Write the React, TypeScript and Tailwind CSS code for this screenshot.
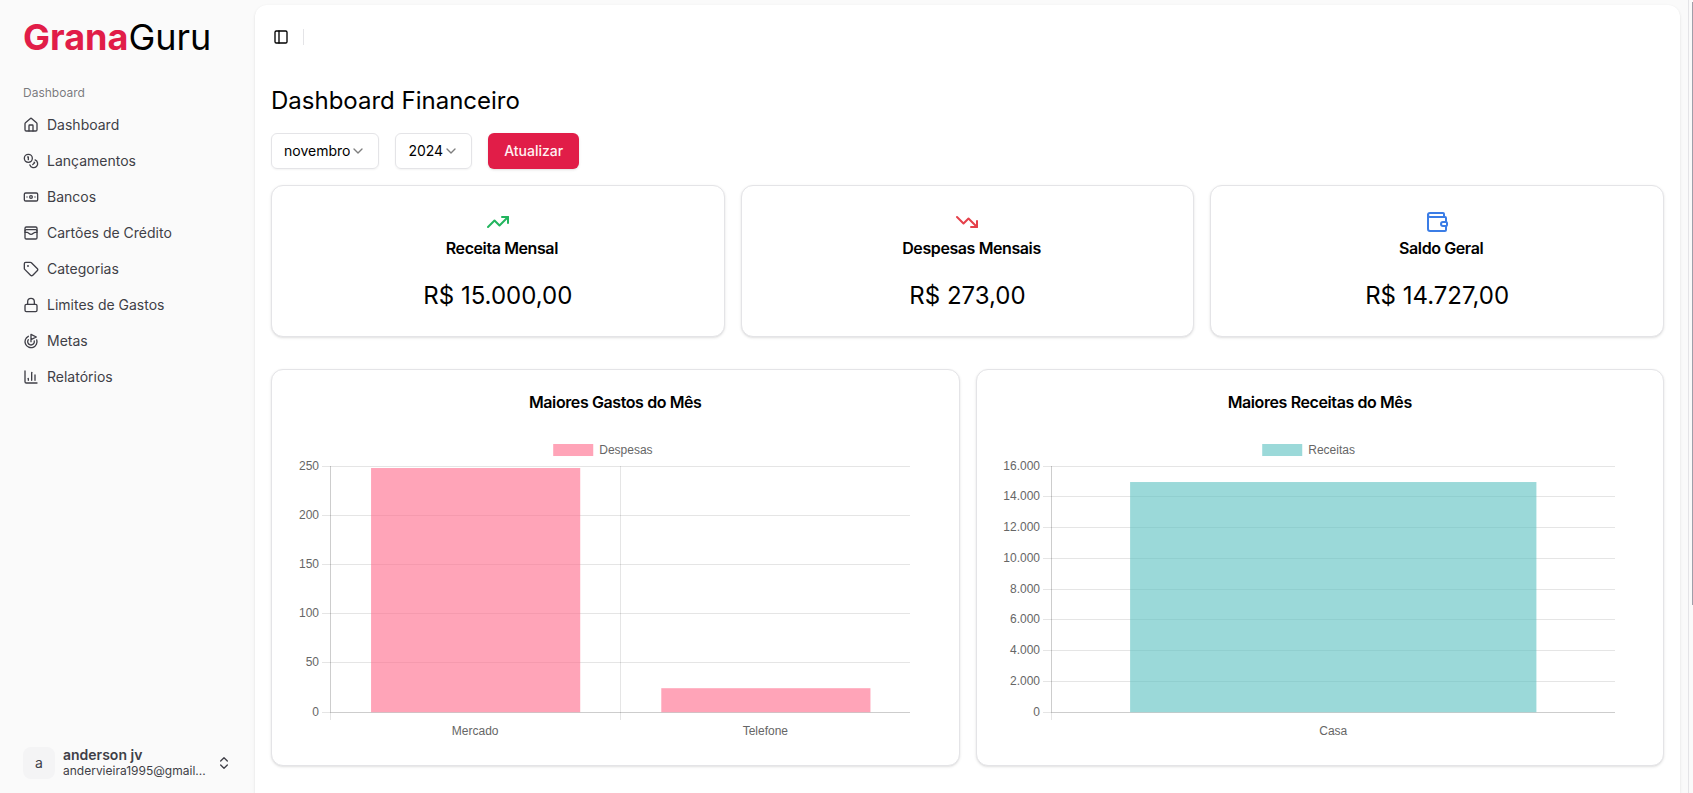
import { useState } from 'react';
import {
  Banknote,
  ChartColumn,
  ChevronDown,
  ChevronsUpDown,
  Coins,
  Goal,
  House,
  Lock,
  PanelLeft,
  Tag,
  TrendingDown,
  TrendingUp,
  Wallet,
  WalletCards,
  type LucideIcon,
} from 'lucide-react';

const NAV_ITEMS: { label: string; icon: LucideIcon }[] = [
  { label: 'Dashboard', icon: House },
  { label: 'Lançamentos', icon: Coins },
  { label: 'Bancos', icon: Banknote },
  { label: 'Cartões de Crédito', icon: WalletCards },
  { label: 'Categorias', icon: Tag },
  { label: 'Limites de Gastos', icon: Lock },
  { label: 'Metas', icon: Goal },
  { label: 'Relatórios', icon: ChartColumn },
];

const MONTHS = [
  'janeiro', 'fevereiro', 'março', 'abril', 'maio', 'junho',
  'julho', 'agosto', 'setembro', 'outubro', 'novembro', 'dezembro',
];

const YEARS = ['2023', '2024', '2025'];

function Sidebar() {
  return (
    <aside className="sticky top-0 flex h-screen w-[255px] shrink-0 flex-col justify-between px-[15px] text-zinc-700">
      <div>
        <h1 className="px-2 pt-4 text-4xl leading-[42px] text-black">
          <span className="font-bold text-[#e11d48]">Grana</span>Guru
        </h1>
        <nav aria-label="Dashboard" className="pt-[19px]">
          <div className="flex h-8 items-center px-2 text-xs text-zinc-700/70">Dashboard</div>
          <ul className="flex flex-col gap-1">
            {NAV_ITEMS.map(({ label, icon: Icon }) => (
              <li key={label}>
                <a href="#" className="flex h-8 items-center gap-2 rounded-md px-2 text-sm hover:bg-zinc-100">
                  <Icon className="size-4 shrink-0" />
                  {label}
                </a>
              </li>
            ))}
          </ul>
        </nav>
      </div>

      <button type="button" className="mb-1.5 flex h-12 items-center gap-2 rounded-md px-2 text-left hover:bg-zinc-100">
        <span className="flex size-8 shrink-0 items-center justify-center rounded-lg bg-zinc-100 text-sm">a</span>
        <span className="grid min-w-0 flex-1">
          <span className="truncate text-sm leading-4 font-semibold">anderson jv</span>
          <span className="text-xs leading-4 whitespace-nowrap">andervieira1995@gmail...</span>
        </span>
        <ChevronsUpDown className="size-4 shrink-0" />
      </button>
    </aside>
  );
}

interface PickerProps {
  label: string;
  value: string;
  options: string[];
  onChange: (value: string) => void;
}

function Picker({ label, value, options, onChange }: PickerProps) {
  return (
    <div className="flex h-9 items-center rounded-md border border-zinc-200 px-3 shadow-xs">
      <select
        aria-label={label}
        value={value}
        onChange={(e) => onChange(e.target.value)}
        className="field-sizing-content appearance-none bg-transparent text-sm outline-none"
      >
        {options.map((option) => (
          <option key={option}>{option}</option>
        ))}
      </select>
      <ChevronDown className="pointer-events-none size-4 opacity-50" />
    </div>
  );
}

interface StatCardProps {
  title: string;
  value: string;
  icon: LucideIcon;
  iconClass: string;
}

function StatCard({ title, value, icon: Icon, iconClass }: StatCardProps) {
  return (
    <section className="flex flex-col items-center rounded-xl border border-zinc-200 bg-white p-6 shadow-sm">
      <Icon className={iconClass} />
      <h3 className="mt-1.5 ml-2 leading-none font-semibold tracking-tight">{title}</h3>
      <p className="mt-6 text-2xl leading-8">{value}</p>
    </section>
  );
}

interface BarChartProps {
  legend: string;
  legendX: number;
  color: string;
  /** Left edge of the plot area, wider labels need more room */
  left: number;
  max: number;
  step: number;
  data: { label: string; value: number }[];
}

const TOP = 32;
const BOTTOM = 278;
const RIGHT = 614;

function BarChart({ legend, legendX, color, left, max, step, data }: BarChartProps) {
  const ticks = Array.from({ length: max / step + 1 }, (_, i) => i * step);
  const y = (value: number) => Math.floor(BOTTOM - (value / max) * (BOTTOM - TOP));
  const slot = (RIGHT - left) / data.length;

  return (
    <svg
      viewBox="0 0 638 307"
      role="img"
      aria-label={legend}
      className="block h-auto w-full font-['Liberation_Sans',Arial,sans-serif] text-[12px]"
    >
      <rect x={legendX} y={10} width={40} height={12} fill={color} />
      <text x={legendX + 46} y={20} fill="#666">{legend}</text>

      <g fill="#000" fillOpacity={0.1} shapeRendering="crispEdges">
        {ticks.map((tick) => (
          <rect key={tick} x={left - 8} y={y(tick)} width={RIGHT - left + 8} height={1} />
        ))}
        {data.map((item, i) => (
          <rect key={item.label} x={Math.round(left + slot * i)} y={TOP} width={1} height={BOTTOM - TOP + 8} />
        ))}
        <rect x={left} y={TOP} width={1} height={BOTTOM - TOP} />
        <rect x={left} y={BOTTOM} width={RIGHT - left} height={1} />
      </g>

      {ticks.map((tick) => (
        <text key={tick} x={left - 11} y={y(tick) + 4} textAnchor="end" fill="#666">
          {tick.toLocaleString('de-DE')}
        </text>
      ))}

      {data.map((item, i) => (
        <g key={item.label}>
          <rect
            x={Math.round(left + slot * (i + 0.14))}
            y={y(item.value) + 1}
            width={Math.round(slot * 0.72)}
            height={BOTTOM - y(item.value) - 1}
            fill={color}
          />
          <text x={left + slot * (i + 0.5)} y={301} textAnchor="middle" fill="#666">
            {item.label}
          </text>
        </g>
      ))}
    </svg>
  );
}

function ChartCard({ title, ...chart }: BarChartProps & { title: string }) {
  return (
    <section className="rounded-xl border border-zinc-200 bg-white p-6 shadow-sm">
      <h3 className="mb-6 text-center leading-none font-semibold tracking-tight">{title}</h3>
      <BarChart {...chart} />
    </section>
  );
}

export default function App() {
  const [month, setMonth] = useState('novembro');
  const [year, setYear] = useState('2024');

  return (
    <div className="flex min-h-screen bg-[#fafafa] font-['Inter',sans-serif] text-black">
      <Sidebar />

      <main className="mt-[5px] mr-2 min-w-0 flex-1 rounded-t-xl bg-white shadow-sm">
        <header className="flex h-16 items-center gap-2 px-4">
          <button
            type="button"
            aria-label="Alternar menu"
            className="-ml-1 flex size-7 items-center justify-center rounded-md hover:bg-zinc-100"
          >
            <PanelLeft className="size-4" />
          </button>
          <div className="h-4 w-px bg-zinc-200" />
        </header>

        <div className="p-4">
          <h2 className="mb-4 text-2xl leading-8">Dashboard Financeiro</h2>

          <form className="mb-4 flex gap-4" onSubmit={(e) => e.preventDefault()}>
            <Picker label="Mês" value={month} options={MONTHS} onChange={setMonth} />
            <Picker label="Ano" value={year} options={YEARS} onChange={setYear} />
            <button type="submit" className="h-9 rounded-md bg-[#e11d48] px-4 text-sm font-medium text-rose-50 shadow-sm">
              Atualizar
            </button>
          </form>

          <div className="mb-8 grid grid-cols-3 gap-4">
            <StatCard title="Receita Mensal" value="R$ 15.000,00" icon={TrendingUp} iconClass="size-6 text-[#22b55e]" />
            <StatCard title="Despesas Mensais" value="R$ 273,00" icon={TrendingDown} iconClass="size-6 text-[#e5404a]" />
            <StatCard title="Saldo Geral" value="R$ 14.727,00" icon={Wallet} iconClass="size-6 text-[#3b7de6]" />
          </div>

          <div className="grid grid-cols-2 gap-4">
            <ChartCard
              title="Maiores Gastos do Mês"
              legend="Despesas"
              legendX={257}
              color="rgba(255,104,136,0.6)"
              left={34}
              max={250}
              step={50}
              data={[
                { label: 'Mercado', value: 248 },
                { label: 'Telefone', value: 25 },
              ]}
            />
            <ChartCard
              title="Maiores Receitas do Mês"
              legend="Receitas"
              legendX={261}
              color="rgba(88,192,192,0.6)"
              left={50}
              max={16000}
              step={2000}
              data={[{ label: 'Casa', value: 15000 }]}
            />
          </div>
        </div>
      </main>

      {/* scroll gutter */}
      <div aria-hidden="true" className="sticky top-0 flex h-screen w-[5px] justify-end border-l border-zinc-200">
        <div className="mt-0.5 h-[76%] w-px bg-zinc-400" />
      </div>
    </div>
  );
}
